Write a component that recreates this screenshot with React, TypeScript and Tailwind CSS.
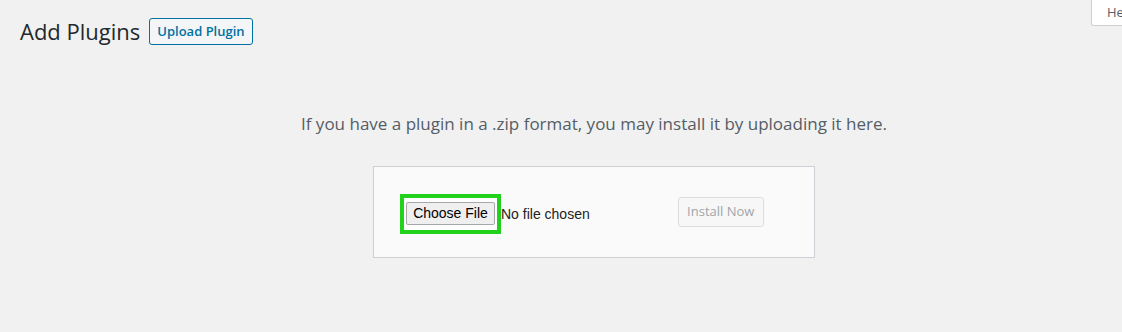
export default function App() {
  return (
    <div
      className="relative h-[332px] w-full overflow-hidden bg-[#f1f1f1]"
      style={{ fontFamily: '"Open Sans", "Noto Sans", sans-serif' }}
    >
      {/* help tab, cut off at the right edge */}
      <div className="absolute right-[-40px] top-0 flex h-[26px] w-[71px] items-center rounded-bl-[3px] border border-t-0 border-[#ccd0d4] bg-white pl-[15px] text-[13px] text-[#555d66]">
        Help
      </div>

      <div className="flex items-center gap-[9px] pl-[20px] pt-[17px]">
        <h1 className="text-[22px] leading-[28px] text-[#23282d]">Add Plugins</h1>
        <button className="h-[27px] rounded-[3px] border border-[#0071a1] bg-[#f3f5f6] px-[7px] text-[13px] font-semibold leading-[25px] text-[#0071a1]">
          Upload Plugin
        </button>
      </div>

      <div className="flex flex-col items-center pl-[66px]">
        <p className="mt-[67px] text-[17px] leading-[24px] text-[#555d66]">
          If you have a plugin in a .zip format, you may install it by uploading it here.
        </p>

        <div className="mt-[30px] flex h-[92px] w-[442px] items-start border border-[#ccd0d4] bg-[#fafafa] pl-[26px] pt-[27px]">
          <div className="flex items-center" style={{ fontFamily: '"Liberation Sans", Arial, sans-serif' }}>
            <div className="border-4 border-[#22d11c] bg-[#fdfdfd] pb-[5px] pl-[2px] pr-[2px] pt-[3px]">
              <button className="h-[23px] w-[89px] rounded-[2px] border border-[#a8a8a8] bg-[#efefef] text-[14px] leading-[21px] text-black">
                Choose File
              </button>
            </div>
            <span className="text-[14px] text-[#222]">No file chosen</span>
          </div>
          <button className="ml-[88px] mt-[3px] h-[30px] w-[86px] rounded-[3px] border border-[#dddddd] bg-[#f7f7f7] text-[13px] text-[#a0a5aa]">
            Install Now
          </button>
        </div>
      </div>
    </div>
  );
}
